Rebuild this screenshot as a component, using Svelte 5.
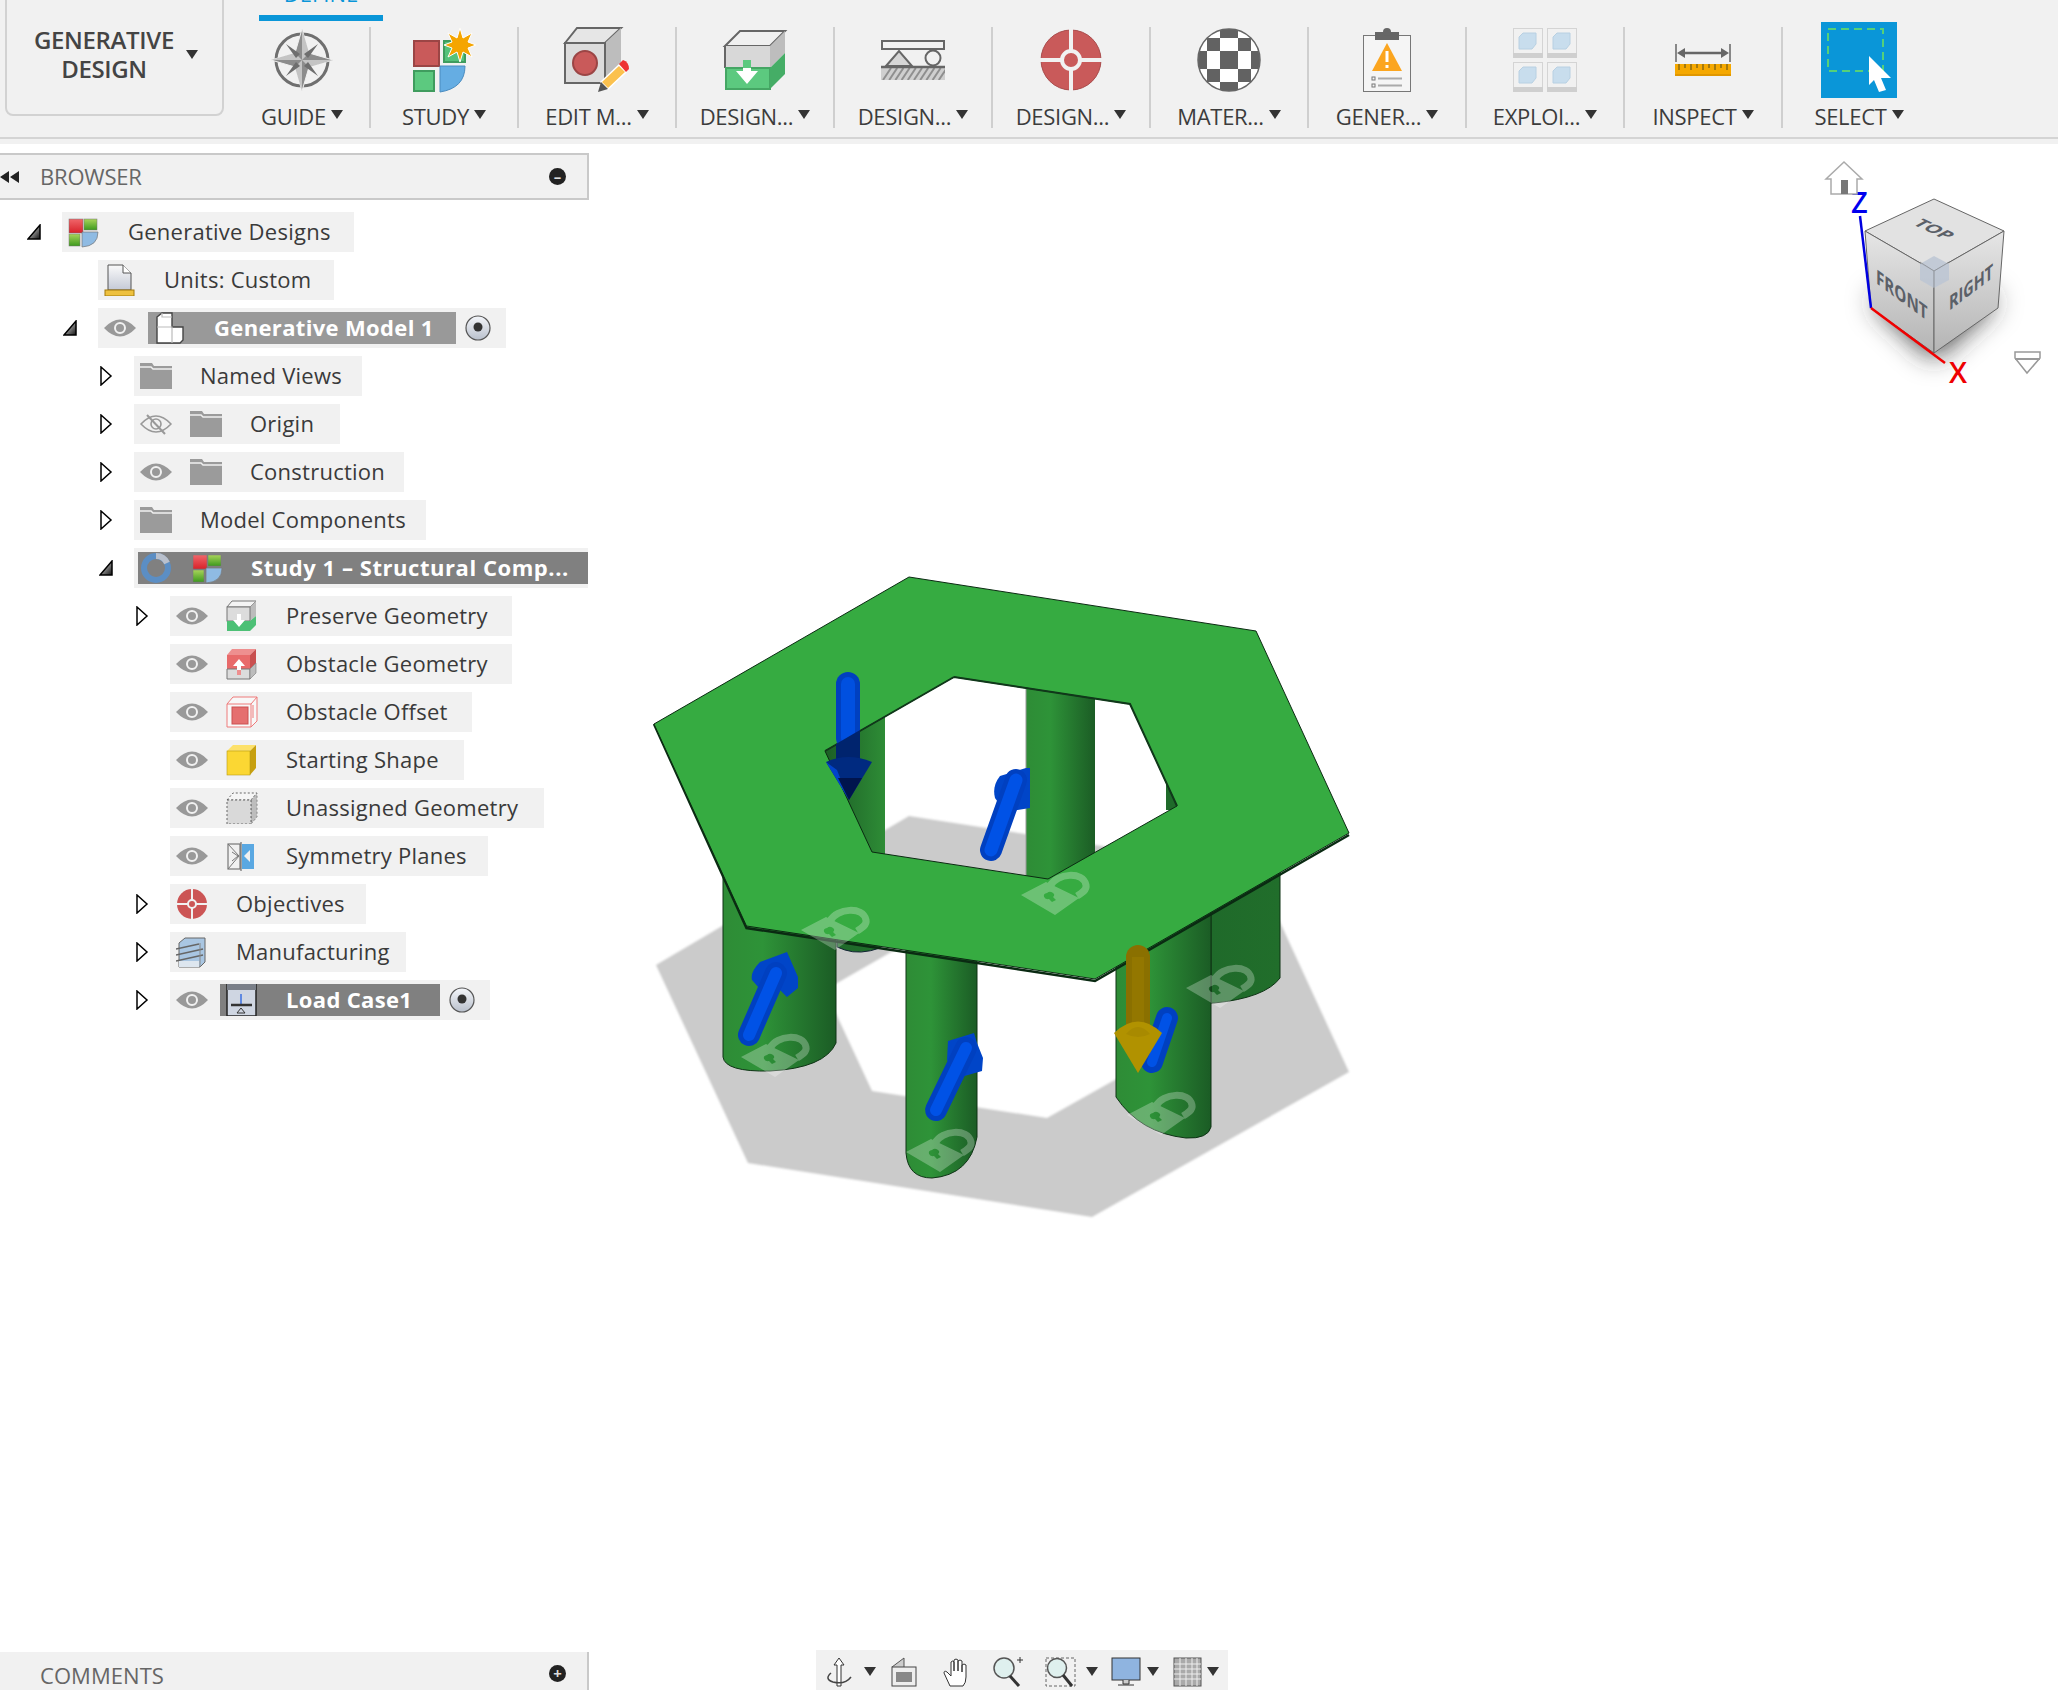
<script>
  const tools = [
    { id: 'guide', label: 'GUIDE', w: 136, cx: 302 },
    { id: 'study', label: 'STUDY', w: 148, cx: 445 },
    { id: 'edit', label: 'EDIT M...', w: 158, cx: 598 },
    { id: 'preserve', label: 'DESIGN...', w: 158, cx: 756 },
    { id: 'constraint', label: 'DESIGN...', w: 158, cx: 914 },
    { id: 'target', label: 'DESIGN...', w: 158, cx: 1072 },
    { id: 'material', label: 'MATER...', w: 158, cx: 1230 },
    { id: 'report', label: 'GENER...', w: 158, cx: 1388 },
    { id: 'explore', label: 'EXPLOI...', w: 158, cx: 1546 },
    { id: 'inspect', label: 'INSPECT', w: 158, cx: 1704 },
    { id: 'select', label: 'SELECT', w: 152, cx: 1858 }
  ];

  const rows = [
    { level: 0, w: 292, arrow: 'open', icon: 'gen', text: 'Generative Designs' },
    { level: 1, w: 236, icon: 'units', text: 'Units: Custom' },
    { level: 1, w: 408, dw: 308, arrow: 'open', eye: 'on', icon: 'model', text: 'Generative Model 1', dark: 'light', radio: true },
    { level: 2, w: 228, arrow: 'closed', icon: 'folder', text: 'Named Views' },
    { level: 2, w: 206, arrow: 'closed', eye: 'off', icon: 'folder', text: 'Origin' },
    { level: 2, w: 270, arrow: 'closed', eye: 'on', icon: 'folder', text: 'Construction' },
    { level: 2, w: 292, arrow: 'closed', icon: 'folder', text: 'Model Components' },
    { level: 2, w: 454, arrow: 'open', study: true, text: 'Study 1 – Structural Comp...' },
    { level: 3, w: 342, arrow: 'closed', eye: 'on', icon: 'preserve', text: 'Preserve Geometry' },
    { level: 3, w: 342, eye: 'on', icon: 'obstacle', text: 'Obstacle Geometry' },
    { level: 3, w: 302, eye: 'on', icon: 'offset', text: 'Obstacle Offset' },
    { level: 3, w: 294, eye: 'on', icon: 'start', text: 'Starting Shape' },
    { level: 3, w: 374, eye: 'on', icon: 'unassigned', text: 'Unassigned Geometry' },
    { level: 3, w: 318, eye: 'on', icon: 'symmetry', text: 'Symmetry Planes' },
    { level: 3, w: 196, arrow: 'closed', icon: 'objectives', text: 'Objectives' },
    { level: 3, w: 236, arrow: 'closed', icon: 'manufacturing', text: 'Manufacturing' },
    { level: 3, w: 320, dw: 220, arrow: 'closed', eye: 'on', icon: 'load', text: 'Load Case1', dark: 'mid', radio: true }
  ];

  const locks = [[1053, 895], [833, 930], [773, 1057], [938, 1152], [1159, 1115], [1218, 988]];
  const xe = [1198, 1208, 1221, 1239, 1252, 1262];
  const ye = [28, 38, 51, 69, 82, 92];
  const checker = [];
  for (let r = 0; r < 5; r++) for (let c = 0; c < 5; c++) if ((r + c) % 2 === 0) checker.push([xe[c], ye[r], xe[c + 1] - xe[c], ye[r + 1] - ye[r]]);
  const hatch = [];
  for (let i = 0; i < 10; i++) hatch.push(884 + i * 6.2);
  const ticks = [];
  for (let i = 0; i < 9; i++) ticks.push(1680 + i * 6);
</script>

{#snippet toolIcon(id)}
  {#if id === 'guide'}
    <circle cx="302" cy="60" r="26" fill="none" stroke="#6f6f6f" stroke-width="3" />
    <path d="M302 29 L309 53 L333 60 L309 67 L302 91 L295 67 L271 60 L295 53Z" fill="#8c8c8c" stroke="#f1f1f1" stroke-width="1" />
    <path d="M302 29 L309 53 L302 60Z M333 60 L309 67 L302 60Z M302 91 L295 67 L302 60Z M271 60 L295 53 L302 60Z" fill="#c4c4c4" />
    <path d="M286 44 L300 54 L296 58Z M318 44 L304 54 L308 58Z M318 76 L304 66 L308 62Z M286 76 L300 66 L296 62Z" fill="#6e6e6e" />
  {:else if id === 'study'}
    <rect x="415" y="41" width="25" height="25" fill="#c95a5a" stroke="#9b4545" stroke-width="2" />
    <rect x="445" y="41" width="21" height="21" fill="#55c27a" stroke="#3f9c5e" stroke-width="2" />
    <rect x="415" y="71" width="20" height="20" fill="#5cc97f" stroke="#3f9c5e" stroke-width="2" />
    <path d="M441 66 H466 Q466 88 441 92Z" fill="#65ade3" stroke="#4a8cc0" stroke-width="1" />
    <path d="M461 28 L464 38 L473 33 L469 42 L477 45 L469 48 L473 57 L464 52 L461 62 L458 52 L449 57 L453 48 L445 45 L453 42 L449 33 L458 38Z" fill="#f5a500" stroke="#fff" stroke-width="1" />
  {:else if id === 'edit'}
    <path d="M566 43 L578 28 H622 L606 43Z" fill="#e6e6e6" stroke="#666" stroke-width="2" />
    <path d="M606 43 L622 28 V68 L606 83Z" fill="#bdbdbd" />
    <rect x="566" y="43" width="40" height="40" fill="#dcdcdc" stroke="#666" stroke-width="2" />
    <ellipse cx="586" cy="63" rx="12" ry="12" fill="#c95a5a" stroke="#9b4545" stroke-width="2" />
    <path d="M602 82 L620 65 L627 72 L609 89Z" fill="#fbc14e" stroke="#fff" stroke-width="1.5" />
    <path d="M620 64 L624 60 Q630 62 630 69 L627 72Z" fill="#ee3333" />
    <path d="M599 92 L602 82 L609 89Z" fill="#555" />
  {:else if id === 'preserve'}
    <path d="M726 46 L741 31 H786 L771 46Z" fill="#f0f0f0" stroke="#666" stroke-width="2" />
    <path d="M771 46 L786 31 V53 L771 68Z" fill="#bdbdbd" />
    <rect x="726" y="46" width="45" height="22" fill="#d8d8d8" />
    <path d="M726 46 V68" stroke="#666" stroke-width="2" />
    <rect x="727" y="68" width="44" height="21" fill="#5cc97f" stroke="#45a664" stroke-width="2" />
    <path d="M771 68 L786 53 V74 L771 89Z" fill="#45ad66" />
    <path d="M744 60 H752 V71 H759 L748 84 L737 71 H744Z" fill="#fff" />
    <rect x="744" y="60" width="8" height="8" fill="#5cc97f" />
  {:else if id === 'constraint'}
    <rect x="883" y="41" width="62" height="8" fill="none" stroke="#666" stroke-width="2" />
    <path d="M887 66 L900 51 L913 66Z" fill="#d6d6d6" stroke="#666" stroke-width="2" />
    <ellipse cx="934" cy="58" rx="7.5" ry="7.5" fill="#f1f1f1" stroke="#666" stroke-width="2" />
    <clipPath id="hz"><rect x="882" y="67" width="64" height="13" /></clipPath>
    <rect x="882" y="67" width="64" height="13" fill="#cfcfcf" />
    <g clip-path="url(#hz)">
      {#each hatch as x}
        <path d="M{x} 80 L{x + 8} 68" stroke="#8f8f8f" stroke-width="2" />
      {/each}
    </g>
    <path d="M882 67 H946" stroke="#666" stroke-width="2.5" />
  {:else if id === 'target'}
    <circle cx="1072" cy="60" r="30" fill="#c95a5a" stroke="#a94b4b" stroke-width="1" />
    <path d="M1072 29 V91 M1041 60 H1103" stroke="#f1f1f1" stroke-width="4" />
    <circle cx="1072" cy="60" r="9" fill="#c95a5a" stroke="#f1f1f1" stroke-width="4" />
  {:else if id === 'material'}
    <clipPath id="ball"><circle cx="1230" cy="60" r="31" /></clipPath>
    <circle cx="1230" cy="60" r="31" fill="#fff" />
    <g clip-path="url(#ball)">
      {#each checker as [x, y, w, h]}
        <rect {x} {y} width={w} height={h} fill="#626262" />
      {/each}
    </g>
    <circle cx="1230" cy="60" r="31" fill="none" stroke="#666" stroke-width="1.5" />
  {:else if id === 'report'}
    <rect x="1364.5" y="35.5" width="47" height="56" fill="#f5f5f5" stroke="#777" />
    <rect x="1376" y="32" width="24" height="8" fill="#666" />
    <circle cx="1388" cy="32" r="4" fill="#666" />
    <path d="M1388 43 L1403 71 H1373Z" fill="#fba51f" />
    <path d="M1388 51 V62 M1388 65 V68" stroke="#fff" stroke-width="3" />
    <rect x="1373" y="77" width="3" height="3" fill="none" stroke="#777" />
    <rect x="1373" y="84" width="3" height="3" fill="none" stroke="#777" />
    <path d="M1379 78.5 H1403 M1379 85.5 H1403" stroke="#aaa" stroke-width="2" />
  {:else if id === 'explore'}
    {#each [[1514, 28], [1548, 28], [1514, 62], [1548, 62]] as [x, y]}
      <rect x={x + 0.5} y={y + 0.5} width="29" height="29" fill="#f1f1f1" stroke="#d4d4d4" />
      <rect {x} y={y + 25} width="30" height="5" fill="#cfcfcf" />
      <path d="M{x + 6} {y + 9} L{x + 10} {y + 5} H{x + 23} V{y + 16} L{x + 19} {y + 21} H{x + 6}Z" fill="#c8dded" stroke="#b8d0e2" />
    {/each}
  {:else if id === 'inspect'}
    <path d="M1677 44 V62 M1731 44 V62" stroke="#666" stroke-width="1.5" />
    <path d="M1684 53 H1724" stroke="#666" stroke-width="2.5" />
    <path d="M1678 53 L1686 48 V58Z M1730 53 L1722 48 V58Z" fill="#666" />
    <rect x="1676" y="64" width="56" height="12" fill="#f5a800" />
    <rect x="1676" y="74" width="56" height="2" fill="#e09700" />
    {#each ticks as x, i}
      <path d="M{x} 64 V{i % 2 ? 68 : 70}" stroke="#8a6a10" stroke-width="1.5" />
    {/each}
  {:else if id === 'select'}
    <rect x="1820" y="22" width="76" height="76" fill="#0a96d8" />
    <rect x="1827" y="29" width="55" height="42" fill="none" stroke="#55d07a" stroke-width="2" stroke-dasharray="8 5" />
    <path d="M1868 56 L1890 78 H1880 L1885 90 L1878 92 L1873 80 L1868 85Z" fill="#fff" />
  {/if}
{/snippet}

{#snippet eye(kind)}
  <svg class="ic" viewBox="0 0 32 24" width="32" height="24">
    {#if kind === 'on'}
      <path d="M0 12 Q16 -5 32 12 Q16 29 0 12Z" fill="#999" />
      <circle cx="16" cy="12" r="5" fill="#999" stroke="#f1f1f1" stroke-width="2" />
    {:else}
      <path d="M1 12 Q16 -4 31 12 Q16 28 1 12Z" fill="none" stroke="#999" stroke-width="1.6" />
      <circle cx="16" cy="12" r="5" fill="none" stroke="#999" stroke-width="1.6" />
      <path d="M7 3 L25 22" stroke="#999" stroke-width="2" />
    {/if}
  </svg>
{/snippet}

{#snippet radio()}
  <svg class="ic" viewBox="0 0 26 26" width="26" height="26">
    <defs><linearGradient id="rad" x1="0" y1="0" x2="0" y2="1"><stop offset="0" stop-color="#f4f6fa" /><stop offset="1" stop-color="#b9c0cc" /></linearGradient></defs>
    <circle cx="13" cy="13" r="12" fill="url(#rad)" stroke="#555" stroke-width="1.2" />
    <circle cx="13" cy="12" r="4.5" fill="#333" />
  </svg>
{/snippet}

{#snippet treeIcon(name)}
  <svg class="ic" viewBox="0 0 32 32" width="32" height="32">
    {#if name === 'gen'}
      <defs>
        <linearGradient id="gr" x1="0" y1="0" x2="0" y2="1"><stop offset="0" stop-color="#f0666a" /><stop offset="1" stop-color="#d8222a" /></linearGradient>
        <linearGradient id="gg" x1="0" y1="0" x2="0" y2="1"><stop offset="0" stop-color="#a8d45a" /><stop offset="1" stop-color="#3d9a1e" /></linearGradient>
      </defs>
      <rect x="1" y="3" width="14" height="14" fill="url(#gr)" stroke="#777" stroke-width="0.5" />
      <rect x="16" y="3" width="13" height="11" fill="url(#gg)" stroke="#777" stroke-width="0.5" />
      <rect x="1" y="18" width="11" height="12" fill="url(#gg)" stroke="#777" stroke-width="0.5" />
      <path d="M14 16 H30 Q30 30 14 31Z" fill="#8fbbe3" stroke="#777" stroke-width="0.7" />
    {:else if name === 'units'}
      <defs><linearGradient id="un" x1="0" y1="0" x2="0" y2="1"><stop offset="0" stop-color="#fafafa" /><stop offset="1" stop-color="#c4c9d6" /></linearGradient></defs>
      <path d="M4 1 H19 L27 9 V26 H4Z" fill="url(#un)" stroke="#555" />
      <path d="M19 1 V9 H27" fill="#fff" stroke="#555" />
      <rect x="1" y="26" width="29" height="6" fill="#eec13f" stroke="#a37b0c" />
    {:else if name === 'model'}
      <path d="M3 5 L8 1 H18 V15 H29 V28 L26 31 H3Z" fill="#fff" stroke="#444" stroke-width="1.4" />
      <path d="M3 15 H18 V31 M8 1 V5 H18" fill="none" stroke="#bbb" stroke-width="1.2" />
    {:else if name === 'folder'}
      <path d="M0 3 H12 L14 6 H32 V29 H0Z" fill="#9b9b9b" />
      <path d="M0 7 H11 L13 9 H32" fill="none" stroke="#f1f1f1" stroke-width="1.4" />
    {:else if name === 'preserve'}
      <path d="M1 7 L6 1 H30 L24 7Z" fill="#f4f4f4" stroke="#777" />
      <path d="M24 7 L30 1 V16 L24 21Z" fill="#bcbcbc" />
      <rect x="1" y="7" width="23" height="14" fill="#dcdcdc" stroke="#777" />
      <path d="M1 21 H24 L30 16 V25 L24 31 H1Z" fill="#4dc076" />
      <path d="M10 15 H14 V21 H18 L12 28 L6 21 H10Z" fill="#fff" transform="translate(1 -1)" />
    {:else if name === 'obstacle'}
      <path d="M1 7 L6 1 H30 L24 7Z" fill="#ee8f8f" />
      <rect x="1" y="7" width="23" height="14" fill="#e86a6a" />
      <path d="M24 7 L30 1 V15 L24 21Z" fill="#c95050" />
      <path d="M1 21 H24 V31 H1Z" fill="#dcdcdc" stroke="#777" />
      <path d="M24 21 L30 15 V25 L24 31Z" fill="#bcbcbc" stroke="#777" stroke-width="0.6" />
      <path d="M12 11 L18 18 H14 V27 H10 V18 H6Z" fill="#fff" transform="translate(1 0)" />
      <path d="M11 22 H15 V27 H11Z" fill="#ee8f8f" />
    {:else if name === 'offset'}
      <path d="M1 8 L7 1 H31 V25 L25 31 H1Z" fill="#f8f8f8" stroke="#ee7a7a" stroke-width="1" />
      <path d="M1 8 H25 V31 M25 8 L31 1" fill="none" stroke="#ee7a7a" stroke-width="1" />
      <rect x="6" y="11" width="16" height="17" fill="#e56f6f" stroke="#c95050" />
      <path d="M27 9 V22" stroke="#ee7a7a" />
    {:else if name === 'start'}
      <path d="M1 7 L7 1 H30 L24 7Z" fill="#fde16a" />
      <path d="M24 7 L30 1 V24 L24 31Z" fill="#c7a010" />
      <rect x="1" y="7" width="23" height="24" fill="#fbd733" stroke="#b79a15" stroke-width="0.6" />
    {:else if name === 'unassigned'}
      <path d="M1 8 L7 1 H31 L25 8Z" fill="#f5f5f5" stroke="#666" stroke-dasharray="2 2" />
      <path d="M25 8 L31 1 V25 L25 32Z" fill="#bdbdbd" stroke="#888" stroke-dasharray="2 2" />
      <rect x="1" y="8" width="24" height="24" fill="#d9d9d9" stroke="#666" stroke-dasharray="2 2" />
    {:else if name === 'symmetry'}
      <rect x="2" y="4" width="12" height="25" fill="#f1f1f1" stroke="#777" stroke-width="1.2" />
      <path d="M2 4 L13 16 L2 29 M6 12 L12 16 L6 21" fill="none" stroke="#777" />
      <path d="M15 2 V31" stroke="#555" />
      <rect x="16" y="4" width="12" height="25" fill="#5aa8e2" />
      <path d="M24 10 L18 16 L24 22Z" fill="#f1f1f1" />
    {:else if name === 'objectives'}
      <circle cx="16" cy="16" r="15" fill="#cc5555" />
      <path d="M16 0 V32 M0 16 H32" stroke="#f1f1f1" stroke-width="2" />
      <circle cx="16" cy="16" r="4" fill="#cc5555" stroke="#f1f1f1" stroke-width="2" />
    {:else if name === 'manufacturing'}
      <path d="M3 7 L9 2 H29 V26 L24 31 H3Z" fill="#a9c6e2" stroke="#666" />
      <path d="M0 13 L23 8 M0 19 L27 13 M0 25 L27 19" stroke="#666" stroke-width="1.6" />
      <path d="M24 7 V31" stroke="#888" />
      <rect x="3" y="25" width="20" height="6" fill="#dde6ef" />
    {:else if name === 'load'}
      <rect x="1" y="0" width="29" height="32" fill="#cfd6e2" stroke="#222" stroke-width="1.5" />
      <rect x="1" y="0" width="29" height="6" fill="#7a7f88" />
      <path d="M15 10 V20" stroke="#3a6fe0" stroke-width="1.5" />
      <path d="M5 21 H26" stroke="#333" stroke-width="2.5" />
      <path d="M15 24 L19 29 H11Z" fill="none" stroke="#333" />
    {/if}
  </svg>
{/snippet}

{#snippet lock(x, y)}
  <g transform="translate({x} {y})" class="lock">
    <path fill-rule="evenodd" d="M-32 0 L-7 -13 L26 3 L2 20Z M-6 -2 a4 3 0 1 1 6 4 l3 3 l-4 2 l-3 -3 a4 3 0 0 1 -2 -6Z" />
    <path d="M-3 -9 C4 -22 30 -24 33 -10 C34 -5 29 -2 24 1" class="shackle" />
  </g>
{/snippet}

<div class="page">
  <header class="toolbar">
    <div class="gen-box">
      <span class="gen-text">GENERATIVE<br />DESIGN</span>
      <i class="caret big"></i>
    </div>
    <div class="tool-area">
      <div class="tab"><span>DEFINE</span></div>
      <div class="tools">
        {#each tools as t}
          <div class="tool" style="width:{t.w}px">
            <svg class="tool-svg" width="84" height="76" viewBox="{t.cx - 42} 22 84 76">
              {@render toolIcon(t.id)}
            </svg>
            <div class="tool-label"><span>{t.label}</span><i class="caret"></i></div>
          </div>
        {/each}
      </div>
    </div>
  </header>

  <div class="body">
    <aside class="browser">
      <div class="panel-head">
        <svg class="rew" width="20" height="14" viewBox="0 0 20 14"><path d="M0 7 L9 1 V13Z M10 7 L19 1 V13Z" fill="#222" /></svg>
        <span class="panel-title">BROWSER</span>
        <span class="round">–</span>
      </div>
      <div class="tree">
        {#each rows as r}
          <div class="row" style="padding-left:{26 + 36 * r.level}px">
            <div class="arrow">
              {#if r.arrow === 'open'}
                <svg width="14" height="16" viewBox="0 0 14 16"><defs><linearGradient id="opn" x1="0" y1="0" x2="1" y2="1"><stop offset="0" stop-color="#fff" /><stop offset="1" stop-color="#111" /></linearGradient></defs><path d="M1 15 L13 1 V15Z" fill="url(#opn)" stroke="#000" stroke-width="1.5" /></svg>
              {:else if r.arrow === 'closed'}
                <svg width="14" height="20" viewBox="0 0 14 20"><path d="M2 1 L12 10 L2 19Z" fill="#fff" stroke="#000" stroke-width="1.5" /></svg>
              {/if}
            </div>
            {#if r.study}
              <div class="pill study" style="width:{r.w}px">
                <div class="dark mid fill">
                  <svg class="ic" viewBox="0 0 32 32" width="32" height="32"><circle cx="16" cy="16" r="12" fill="none" stroke="#5b8ec4" stroke-width="6" /><path d="M16 4 A12 12 0 0 1 27 11" fill="none" stroke="#b9c0cc" stroke-width="6" /></svg>
                  <span class="stu-icon">{@render treeIcon('gen')}</span>
                  <span class="t strong wide">{r.text}</span>
                </div>
              </div>
            {:else}
              <div class="pill" class:has-dark={r.dark} style="width:{r.w}px">
                {#if r.eye}{@render eye(r.eye)}{/if}
                {#if r.dark}
                  <div class="dark {r.dark}" style="width:{r.dw}px">
                    {@render treeIcon(r.icon)}
                    <span class="t strong">{r.text}</span>
                  </div>
                  {@render radio()}
                {:else}
                  {@render treeIcon(r.icon)}
                  <span class="t">{r.text}</span>
                {/if}
              </div>
            {/if}
          </div>
        {/each}
      </div>
      <div class="panel-foot">
        <span class="panel-title">COMMENTS</span>
        <span class="round">+</span>
      </div>
    </aside>

    <main class="viewport">
      <svg class="scene" width="1469" height="1546" viewBox="589 144 1469 1546">
        <defs>
          <linearGradient id="cyl" x1="0" y1="0" x2="1" y2="0">
            <stop offset="0" stop-color="#2e8c36" />
            <stop offset="0.35" stop-color="#2e9338" />
            <stop offset="1" stop-color="#1b5c25" />
          </linearGradient>
          <linearGradient id="cylD" x1="0" y1="0" x2="1" y2="0">
            <stop offset="0" stop-color="#1f6a2a" />
            <stop offset="1" stop-color="#216e2b" />
          </linearGradient>
          <linearGradient id="cylG" x1="0" y1="0" x2="1" y2="0">
            <stop offset="0" stop-color="#1a5a24" />
            <stop offset="1" stop-color="#2e8c36" />
          </linearGradient>
          <linearGradient id="face" x1="0" y1="0" x2="0" y2="1">
            <stop offset="0" stop-color="#e6e6e6" />
            <stop offset="1" stop-color="#b4b4b4" />
          </linearGradient>
          <filter id="soft"><feGaussianBlur stdDeviation="1.2" /></filter>
          <filter id="cubeBlur" x="-50%" y="-50%" width="200%" height="200%"><feGaussianBlur stdDeviation="14" /></filter>
        </defs>

        <path class="shadow" fill-rule="evenodd" d="M909 816 L1256 870 L1349 1072 L1092 1217 L748 1163 L656 965Z M954 916 L825 990 L872 1091 L1047 1118 L1177 1045 L1130 943Z" />

        <path d="M820 700 H885 V860 H820Z" fill="url(#cylG)" />
        <path d="M1166 770 H1200 V810 H1166Z" fill="#1f6a2a" />
        <path d="M1026 680 H1095 V885 H1026Z" fill="url(#cyl)" />
        <path d="M1026 680 V885" stroke="#999" stroke-width="1" />
        <path d="M837 930 H880 V948 Q860 955 845 950 L837 947Z" fill="url(#cylD)" stroke="#123" stroke-width="1" />
        <path d="M1211 830 H1280 V978 Q1265 998 1214 1003 H1211Z" fill="url(#cylD)" stroke="#0e3315" stroke-width="1" />
        <path d="M723 850 H836 V1043 Q825 1068 770 1071 Q725 1072 723 1057Z" fill="url(#cyl)" stroke="#0e3315" stroke-width="1" />
        <path d="M906 930 H977 V1137 Q970 1175 932 1178 Q908 1178 906 1153Z" fill="url(#cyl)" stroke="#0e3315" stroke-width="1" />
        <path d="M1116 890 H1211 V1127 Q1208 1139 1186 1138 Q1140 1133 1116 1097Z" fill="url(#cyl)" stroke="#0e3315" stroke-width="1" />

        <!-- centre arrow, behind the plate -->
        <path d="M1026 768 L1000 776 Q992 786 995 798 L1005 812 L1030 808 L1030 768Z" fill="#0045c8" />
        <path d="M991 850 L1016 780" stroke="#0040c0" stroke-width="22" stroke-linecap="round" />
        <path d="M991 850 L1016 780" stroke="#0052e6" stroke-width="13" stroke-linecap="round" />

        <path d="M654 724 L746.500 928 L1095 981 L1349 835" fill="none" stroke="#0a2a12" stroke-width="2.500" />
        <path class="plate" fill-rule="evenodd" d="M909 577 L1256 631 L1349 833 L1095 979 L746.500 926 L654 724Z M954 677 L825 751 L872 852 L1048 879 L1177 806 L1130 704Z" />
        <path d="M954 677 L1130 704 L1177 806 M825 751 L954 677" fill="none" stroke="#10381a" stroke-width="2" />

        <!-- loaded arrow over plate -->
        <path d="M848 684 V738" stroke="#0040c0" stroke-width="24" stroke-linecap="round" />
        <path d="M848 684 V738" stroke="#0050e0" stroke-width="14" stroke-linecap="round" />
        <path d="M836 744 L860 730 V765 H836Z" fill="#00246e" />
        <path d="M826 762 Q848 752 872 762 L849 800Z" fill="#002a80" />
        <path d="M826 762 L849 800 L837 770Z" fill="#0044cc" />
        <path d="M849 800 L862 778 L838 778Z" fill="#00144d" />

        {#each locks as [x, y]}
          {@render lock(x, y)}
        {/each}

        <!-- arrows on pillars -->
        <path d="M787 952 L760 962 Q750 972 752 980 L759 988 L780 990 L787 997 L798 988 L798 977Z" fill="#0045c8" />
        <path d="M749 1035 L776 973" stroke="#0040c0" stroke-width="22" stroke-linecap="round" />
        <path d="M749 1035 L776 973" stroke="#0052e6" stroke-width="12" stroke-linecap="round" />

        <path d="M974 1033 L948 1041 L947 1060 L961 1077 L982 1071 L983 1058 L977 1043Z" fill="#0045c8" />
        <path d="M936 1110 L966 1048" stroke="#0040c0" stroke-width="22" stroke-linecap="round" />
        <path d="M936 1110 L966 1048" stroke="#0052e6" stroke-width="12" stroke-linecap="round" />

        <path d="M1167 1018 L1152 1062" stroke="#0040c0" stroke-width="22" stroke-linecap="round" />
        <path d="M1167 1018 L1152 1062" stroke="#0052e6" stroke-width="10" stroke-linecap="round" />

        <path d="M1138 957 V1032" stroke="#8a7000" stroke-width="24" stroke-linecap="round" />
        <path d="M1138 957 V1032" stroke="#937700" stroke-width="12" />
        <path d="M1114 1033 Q1138 1010 1162 1033 L1138 1073Z" fill="#b19200" />
        <path d="M1126 1034 Q1138 1020 1150 1034 L1150 1034 Q1138 1040 1126 1034Z" fill="#a88a00" />

        <!-- view cube -->
        <path d="M1871 300 L1934 358 L1998 300 L1934 280Z" fill="#333" filter="url(#cubeBlur)" />
        <path d="M1934 199 L2004 231 L1934 271 L1865 231Z" fill="#e2e2e2" stroke="#666" />
        <path d="M1865 231 L1934 271 V353 L1871 308Z" fill="url(#face)" stroke="#666" />
        <path d="M2004 231 L1934 271 V353 L1998 308Z" fill="url(#face)" stroke="#666" />
        <path d="M1934 256 L1949 264 V280 L1934 288 L1920 280 V264Z" fill="#bcc6d4" opacity="0.85" />
        <path d="M1934 271 V288 M1934 271 L1949 262 M1934 271 L1920 262" stroke="#777" stroke-width="1" opacity="0.5" />
        <text class="cube-t" transform="matrix(0.88 0.42 -0.8 0.42 1912 224)" font-size="19">TOP</text>
        <text class="cube-t" transform="matrix(0.76 0.56 0 1 1876 283)" font-size="20">FRONT</text>
        <text class="cube-t" transform="matrix(0.72 -0.55 0 1 1949 311)" font-size="20">RIGHT</text>
        <path d="M1871 308 L1860 216" stroke="#0000e0" stroke-width="2.500" />
        <path d="M1871 308 L1945 363" stroke="#f00000" stroke-width="2.500" />
        <text class="axis" x="1851" y="213" fill="#0000ee">Z</text>
        <text class="axis" x="1949" y="383" fill="#ee0000">X</text>
        <path d="M1844 162 L1862 179 H1857 V194 H1831 V179 H1826Z" fill="#fff" stroke="#aaa" stroke-width="1.500" />
        <rect x="1841" y="180" width="7" height="14" fill="#777" />
        <path d="M2015 352 H2040 V358 L2027 373 L2015 358Z" fill="#fff" stroke="#999" stroke-width="1.500" />
        <path d="M2015 359 H2040" stroke="#999" stroke-width="2" />
      </svg>

      <div class="nav">
        <svg width="28" height="30" viewBox="0 0 28 30"><path d="M14 1 L19 8 H16 V29 H12 V8 H9Z" fill="#fff" stroke="#333" /><path d="M6 16 Q-1 22 8 25 Q20 28 26 20" fill="none" stroke="#444" stroke-width="1.500" /></svg>
        <i class="caret sm"></i>
        <svg width="30" height="30" viewBox="0 0 30 30"><path d="M3 10 L15 1 V10" fill="#ccc" stroke="#555" /><rect x="3" y="10" width="24" height="19" fill="#eee" stroke="#444" /><rect x="7" y="15" width="16" height="10" fill="#888" /></svg>
        <svg width="32" height="30" viewBox="0 0 32 30"><path d="M9 29 L3 16 Q3 13 6 15 L10 19 V5 Q12 3 13 5 V14 V3 Q15 1 17 3 V14 V4 Q19 2 21 4 V15 V8 Q23 6 25 8 V20 Q25 26 22 29Z" fill="#fff" stroke="#333" /></svg>
        <svg width="32" height="30" viewBox="0 0 32 30"><circle cx="12" cy="11" r="10" fill="#dff0ee" stroke="#555" stroke-width="1.500" /><path d="M18 19 L27 29" stroke="#333" stroke-width="3" /><path d="M25 3 H31 M28 0 V6" stroke="#333" /></svg>
        <svg width="31" height="30" viewBox="0 0 31 30"><rect x="1" y="1" width="29" height="28" fill="none" stroke="#666" stroke-dasharray="3 2" /><circle cx="12" cy="11" r="9.500" fill="#dff0ee" stroke="#555" stroke-width="1.500" /><path d="M18 18 L27 29" stroke="#333" stroke-width="3" /></svg>
        <i class="caret sm"></i>
        <svg width="30" height="30" viewBox="0 0 30 30"><rect x="1" y="1" width="28" height="22" fill="#8fb4e0" stroke="#333" /><path d="M12 23 V27 H18 V23 M7 28 H23" fill="#ccc" stroke="#333" /></svg>
        <i class="caret sm"></i>
        <svg width="29" height="30" viewBox="0 0 29 30"><rect x="1" y="1" width="27" height="28" fill="#aaa" stroke="#555" /><path d="M1 7 H28 M1 12 H28 M1 17 H28 M1 22 H28 M7 1 V29 M13 1 V29 M19 1 V29 M24 1 V29" stroke="#eee" /></svg>
        <i class="caret sm"></i>
      </div>
    </main>
  </div>
</div>

<style>
  :global(body) { margin: 0; background: #fff; overflow: hidden; }
  .page { width: 2058px; height: 1690px; display: flex; flex-direction: column; font-family: "Open Sans", "Noto Sans", sans-serif; color: #3c3c3c; overflow: hidden; }

  .toolbar { height: 144px; flex: none; box-sizing: border-box; background: #f1f1f1; display: flex; position: relative; }
  .toolbar::after { content: ""; position: absolute; left: 0; right: 0; top: 137px; height: 2px; background: #d4d4d4; }
  .gen-box { box-sizing: border-box; width: 219px; height: 126px; margin: -10px 0 0 5px; border: 2px solid #d2d2d2; border-radius: 8px; display: flex; align-items: center; gap: 12px; padding: 2px 0 0 27px; }
  .gen-text { font-size: 24px; font-weight: 600; line-height: 29px; text-align: center; letter-spacing: -0.35px; color: #444; }

  .tool-area { margin-left: 11px; display: flex; flex-direction: column; }
  .tab { box-sizing: border-box; width: 124px; height: 21px; margin-left: 24px; border-bottom: 6px solid #0a96d8; display: flex; align-items: flex-end; justify-content: center; padding-bottom: 11px; color: #0a96d8; font-size: 22px; line-height: 22px; overflow: hidden; }
  .tools { display: flex; margin-top: 6px; }
  .tool { box-sizing: border-box; height: 101px; border-right: 2px solid #cfcfcf; display: flex; flex-direction: column; align-items: center; }
  .tool:last-child { border-right: none; }
  .tool-svg { margin-top: -5px; flex: none; }
  .tool-label { display: flex; align-items: center; gap: 5px; margin-top: 3px; font-size: 22px; line-height: 30px; letter-spacing: -0.3px; color: #3c3c3c; white-space: nowrap; }

  .caret { display: inline-block; width: 0; height: 0; border-left: 6.5px solid transparent; border-right: 6.5px solid transparent; border-top: 9px solid #333; margin-bottom: 4px; }
  .caret.big { margin-bottom: 0; }
  .caret.sm { margin: 0; }

  .body { flex: 1; display: flex; min-height: 0; }
  .browser { width: 589px; flex: none; display: flex; flex-direction: column; padding-top: 9px; box-sizing: border-box; }
  .panel-head { box-sizing: border-box; height: 47px; background: #f1f1f1; border: 2px solid #c9c9c9; border-left: none; display: flex; align-items: center; }
  .rew { flex: none; }
  .panel-title { font-size: 22px; line-height: 30px; color: #666; margin-left: 20px; letter-spacing: -0.2px; flex: 1; transform: translateY(-1px); }
  .round { width: 17px; height: 17px; border-radius: 50%; background: #222; color: #ddd; font-size: 15px; font-weight: 700; line-height: 16px; text-align: center; margin-right: 21px; }

  .tree { flex: 1; display: flex; flex-direction: column; gap: 8px; padding-top: 12px; }
  .row { display: flex; align-items: center; height: 40px; flex: none; }
  .arrow { width: 36px; flex: none; display: flex; align-items: center; }
  .arrow svg { display: block; margin-left: 1px; }
  .pill { height: 40px; box-sizing: border-box; background: #f1f1f1; display: flex; align-items: center; padding-left: 6px; flex: none; }
  .pill > .ic + .ic { margin-left: 18px; }
  .pill > .ic + .t { margin-left: 28px; }
  .pill.study { padding-left: 4px; }
  .ic { flex: none; display: block; }
  .t { font-size: 22px; line-height: 30px; letter-spacing: 0.25px; white-space: nowrap; color: #3a3a3a; margin-top: -2px; }
  .dark { height: 32px; box-sizing: border-box; flex: none; display: flex; align-items: center; margin: 0 9px 0 12px; padding-left: 6px; }
  .dark.light { background: #999; }
  .dark.mid { background: #808080; }
  .dark.fill { flex: 1; margin: 0; padding: 0 0 0 2px; }
  .dark .t { margin-left: 28px; }
  .stu-icon { margin-left: 20px; display: block; flex: none; }
  .dark.fill .t { margin-left: 27px; }
  .t.strong { color: #fff; font-weight: 700; letter-spacing: 0.35px; }
  .t.strong.wide { letter-spacing: 0.55px; }

  .panel-foot { box-sizing: border-box; height: 38px; background: #f1f1f1; border-right: 2px solid #c9c9c9; display: flex; align-items: center; padding-left: 20px; flex: none; }
  .panel-foot .panel-title { transform: translateY(4px); letter-spacing: 0.05px; }
  .panel-foot .round { transform: translateY(2px); }

  .viewport { flex: 1; position: relative; min-width: 0; }
  .scene { position: absolute; inset: 0; display: block; }
  .shadow { fill: #cbcbcb; filter: url(#soft); }
  .plate { fill: #36ab41; stroke: #0b2a12; stroke-width: 1; }
  .lock { fill: #fff; opacity: 0.27; }
  .shackle { fill: none; stroke: #fff; stroke-width: 7; }
  .cube-t { font-family: "Open Sans", sans-serif; font-weight: 700; fill: #5b6068; }
  .axis { font-family: "Open Sans", sans-serif; font-size: 29px; font-weight: 600; }

  .nav { position: absolute; left: 227px; bottom: 0; width: 412px; height: 40px; box-sizing: border-box; background: #f1f1f1; display: flex; align-items: flex-end; padding: 0 0 3px 9px; }
  .nav svg { flex: none; display: block; }
  .nav .caret { margin-bottom: 11px; flex: none; }
  .nav > :nth-child(2) { margin-left: 11px; }
  .nav > :nth-child(3) { margin-left: 13px; }
  .nav > :nth-child(4) { margin-left: 22px; }
  .nav > :nth-child(5) { margin-left: 19px; }
  .nav > :nth-child(6) { margin-left: 21px; }
  .nav > :nth-child(7) { margin-left: 10px; }
  .nav > :nth-child(8) { margin-left: 13px; }
  .nav > :nth-child(9) { margin-left: 6px; }
  .nav > :nth-child(10) { margin-left: 14px; }
  .nav > :nth-child(11) { margin-left: 5px; }
</style>
